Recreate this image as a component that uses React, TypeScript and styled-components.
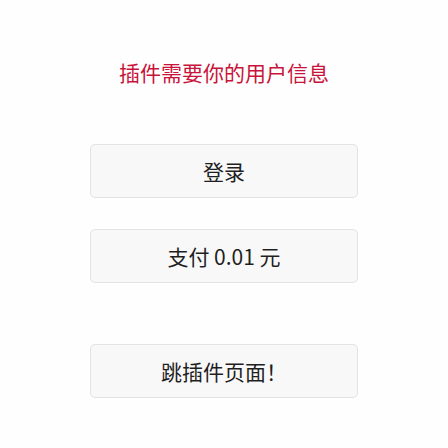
import React from "react";
import styled, { createGlobalStyle } from "styled-components";

const GlobalStyle = createGlobalStyle`
  html, body {
    margin: 0;
    padding: 0;
    background: #ffffff;
  }
  body {
    font-family: "Noto Sans CJK SC", "Noto Sans", sans-serif;
  }
`;

const Page = styled.div`
  width: 448px;
  height: 448px;
  display: flex;
  flex-direction: column;
  align-items: center;
  box-sizing: border-box;
  padding-top: 58px;
  background: #fefefe;
`;

const Title = styled.h1`
  margin: 0 0 57px;
  font-size: 21px;
  line-height: 29px;
  font-weight: 400;
  color: #c8143a;
`;

const Button = styled.button<{ $gap?: number }>`
  width: 268px;
  height: 54px;
  margin-bottom: ${(p) => p.$gap ?? 0}px;
  border: 1px solid #e3e3e6;
  border-radius: 5px;
  background: #f8f8f9;
  color: #1f1f1f;
  font-family: "Noto Sans CJK SC", "Noto Sans", sans-serif;
  font-size: 21px;
  cursor: pointer;
  display: flex;
  align-items: center;
  justify-content: center;
  padding: 0;
`;

export default function App() {
  return (
    <>
      <GlobalStyle />
      <Page>
        <Title>插件需要你的用户信息</Title>
        <Button $gap={31}>登录</Button>
        <Button $gap={61}>支付 0.01 元</Button>
        <Button>跳插件页面！</Button>
      </Page>
    </>
  );
}
